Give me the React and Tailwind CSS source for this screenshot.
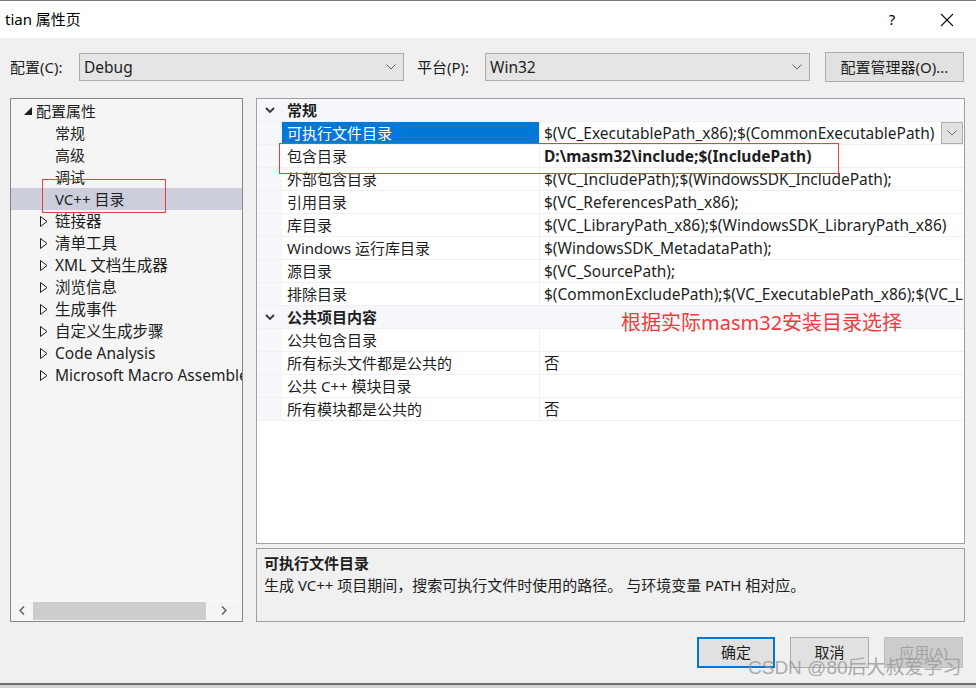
import React from "react";

const Chevron = ({ className = "", color = "#606060" }) => (
  <svg width="10" height="6" viewBox="0 0 10 6" className={className}>
    <polyline points="0.5,0.5 5,5 9.5,0.5" fill="none" stroke={color} strokeWidth="1" />
  </svg>
);

const BoldChevron = () => (
  <svg width="10" height="7" viewBox="0 0 10 7">
    <polyline points="1,1 5,5 9,1" fill="none" stroke="#333" strokeWidth="1.8" />
  </svg>
);

const Collapsed = () => (
  <svg width="8" height="11" viewBox="0 0 8 11">
    <polygon points="0.5,0.5 7,5.5 0.5,10.5" fill="none" stroke="#1e1e1e" strokeWidth="1" />
  </svg>
);

const Expanded = () => (
  <svg width="8" height="8" viewBox="0 0 8 8">
    <polygon points="8,0 8,8 0,8" fill="#1e1e1e" />
  </svg>
);

const treeItems = [
  "链接器",
  "清单工具",
  "XML 文档生成器",
  "浏览信息",
  "生成事件",
  "自定义生成步骤",
  "Code Analysis",
  "Microsoft Macro Assembler",
];

const general = [
  ["可执行文件目录", "$(VC_ExecutablePath_x86);$(CommonExecutablePath)", "sel"],
  ["包含目录", "D:\\masm32\\include;$(IncludePath)", "bold"],
  ["外部包含目录", "$(VC_IncludePath);$(WindowsSDK_IncludePath);"],
  ["引用目录", "$(VC_ReferencesPath_x86);"],
  ["库目录", "$(VC_LibraryPath_x86);$(WindowsSDK_LibraryPath_x86)"],
  ["Windows 运行库目录", "$(WindowsSDK_MetadataPath);"],
  ["源目录", "$(VC_SourcePath);"],
  ["排除目录", "$(CommonExcludePath);$(VC_ExecutablePath_x86);$(VC_LibraryPath_x86)"],
];

const publicItems = [
  ["公共包含目录", ""],
  ["所有标头文件都是公共的", "否"],
  ["公共 C++ 模块目录", ""],
  ["所有模块都是公共的", "否"],
];

function Row({ name, value, kind }) {
  return (
    <div className="flex h-[23px] border-b border-[#f0f0f0]">
      <div className="w-[25px] shrink-0 bg-[#f5f7fa]" />
      <div
        className={
          "w-[258px] shrink-0 pl-[5px] flex items-center whitespace-nowrap overflow-hidden border-r border-[#f0f0f0] " +
          (kind === "sel" ? "bg-[#0078d7] text-white" : "bg-white text-[#1e1e1e]")
        }
      >
        {name}
      </div>
      <div
        className={
          "flex-1 min-w-0 pl-[4px] flex items-center whitespace-nowrap overflow-hidden bg-white text-[#1e1e1e] text-[15.5px] " +
          (kind === "bold" ? "font-bold" : "")
        }
      >
        <span className="flex-1 min-w-0 leading-[21px] overflow-hidden">{value}</span>
        {kind === "sel" && (
          <div className="w-[22px] h-[22px] shrink-0 mr-[1px] bg-[#e1e1e1] border border-[#adadad] flex items-center justify-center">
            <Chevron color="#707070" />
          </div>
        )}
      </div>
    </div>
  );
}

function Category({ title }) {
  return (
    <div className="flex h-[23px] bg-[#f5f7fa] items-center border-b border-[#f0f0f0]">
      <div className="w-[25px] shrink-0 flex items-center justify-center pt-[1px]">
        <BoldChevron />
      </div>
      <div className="pl-[5px] font-bold text-[#1e1e1e]">{title}</div>
    </div>
  );
}

export default function App() {
  return (
    <div className="relative w-[976px] h-[688px] overflow-hidden bg-[#f0f0f0] text-[15px] text-[#1e1e1e] font-['Noto_Sans','Noto_Sans_CJK_SC',sans-serif] leading-none">
      {/* title bar */}
      <div className="h-[38px] bg-white border-t border-[#777] flex items-center pl-[5px]">
        <div className="flex-1 text-[15px] text-black">tian 属性页</div>
        <div className="w-[40px] text-center text-[15px] text-black mr-[25px]">?</div>
        <div className="w-[20px] mr-[19px] flex items-center justify-center">
          <svg width="14" height="14" viewBox="0 0 14 14">
            <path d="M1 1 L13 13 M13 1 L1 13" stroke="#111" strokeWidth="1.1" />
          </svg>
        </div>
      </div>

      {/* config row */}
      <div className="flex items-center h-[30px] mt-[14px] pl-[10px]">
        <div className="w-[69px]">配置(C):</div>
        <div className="w-[325px] h-[28px] bg-[#e5e5e5] border border-[#adadad] flex items-center pl-[4px] pr-[7px]">
          <span className="flex-1 text-[15.5px] leading-[20px]">Debug</span>
          <Chevron color="#606060" />
        </div>
        <div className="w-[81px] pl-[13px]">平台(P):</div>
        <div className="w-[325px] h-[28px] bg-[#e5e5e5] border border-[#adadad] flex items-center pl-[4px] pr-[7px]">
          <span className="flex-1 text-[15.5px] leading-[20px]">Win32</span>
          <Chevron color="#606060" />
        </div>
        <div className="ml-[15px] w-[139px] h-[30px] bg-[#e1e1e1] border border-[#adadad] flex items-center justify-center">
          配置管理器(O)...
        </div>
      </div>

      {/* main */}
      <div className="flex mt-[16px] pl-[10px] h-[524px]">
        {/* tree */}
        <div className="w-[233px] h-full border border-[#828790] bg-[#f5f5f5] flex flex-col">
          <div className="flex-1 pt-[1px] overflow-hidden">
            <div className="h-[22px] flex items-center">
              <div className="w-[24px] flex justify-end pr-[3px]">
                <Expanded />
              </div>
              <span className="pl-[1px]">配置属性</span>
            </div>
            {["常规", "高级", "调试", "VC++ 目录"].map((t, i) => (
              <div
                key={t}
                className={"h-[22px] flex items-center pl-[44px] " + (i === 3 ? "bg-[#cccedb]" : "")}
              >
                {t}
              </div>
            ))}
            {treeItems.map((t) => (
              <div key={t} className="h-[22px] flex items-center whitespace-nowrap">
                <div className="w-[44px] shrink-0 pl-[29px] flex items-center">
                  <Collapsed />
                </div>
                <span className="text-[15.5px] leading-[20px]">{t}</span>
              </div>
            ))}
          </div>
          <div className="h-[20px] mb-[1px] border-t border-[#fafafa] flex items-center">
            <div className="w-[22px] flex justify-center">
              <svg width="6" height="9" viewBox="0 0 6 9">
                <polyline points="5,0.5 1,4.5 5,8.5" fill="none" stroke="#606060" strokeWidth="1.5" />
              </svg>
            </div>
            <div className="w-[173px] h-[18px] bg-[#cdcdcd]" />
            <div className="flex-1 flex justify-center">
              <svg width="6" height="9" viewBox="0 0 6 9">
                <polyline points="1,0.5 5,4.5 1,8.5" fill="none" stroke="#606060" strokeWidth="1.5" />
              </svg>
            </div>
          </div>
        </div>

        {/* right column */}
        <div className="ml-[13px] w-[709px] h-full flex flex-col">
          <div className="h-[446px] border border-[#a0a0a0] bg-white overflow-hidden flex flex-col">
            <Category title="常规" />
            {general.map(([n, v, k]) => (
              <Row key={n} name={n} value={v} kind={k} />
            ))}
            <Category title="公共项目内容" />
            {publicItems.map(([n, v]) => (
              <Row key={n} name={n} value={v} />
            ))}
          </div>
          <div className="mt-[4px] flex-1 border border-[#a0a0a0] bg-[#f0f0f0] pl-[7px] pt-[7px]">
            <div className="font-bold">可执行文件目录</div>
            <div className="mt-[5px] text-[15px] leading-[18px]">
              生成 VC++ 项目期间，搜索可执行文件时使用的路径。 与环境变量 PATH 相对应。
            </div>
          </div>
        </div>
      </div>

      {/* buttons */}
      <div className="flex justify-end pr-[13px] mt-[15px] gap-[15px]">
        <div className="w-[78px] h-[31px] bg-[#e1e1e1] border-2 border-[#0078d7] flex items-center justify-center">
          确定
        </div>
        <div className="w-[79px] h-[31px] bg-[#e1e1e1] border border-[#adadad] flex items-center justify-center">
          取消
        </div>
        <div className="w-[79px] h-[31px] bg-[#cccccc] border border-[#bfbfbf] text-[#a3a3a3] flex items-center justify-center">
          应用(A)
        </div>
      </div>

      {/* bottom window edge */}
      <div className="absolute left-0 right-0 top-[683px] h-[2px] bg-[#6e6e6e]" />
      <div className="absolute left-0 right-0 top-[685px] h-[3px] bg-[#d4d4d4]" />

      {/* annotations */}
      <div className="absolute left-[42px] top-[179px] w-[124px] h-[34px] border border-[#f03c3c]" />
      <div className="absolute left-[279px] top-[143px] w-[560px] h-[31px] border border-[#f03c3c]" />
      <div className="absolute left-[621px] top-[313px] text-[20px] text-[#f03c3c] whitespace-nowrap">
        根据实际masm32安装目录选择
      </div>
      <div className="absolute left-[748px] top-[658px] text-[19px] text-[#9a9a9a] opacity-80 whitespace-nowrap font-['Liberation_Sans','Noto_Sans_CJK_SC',sans-serif]">
        CSDN @80后大叔爱学习
      </div>
    </div>
  );
}
